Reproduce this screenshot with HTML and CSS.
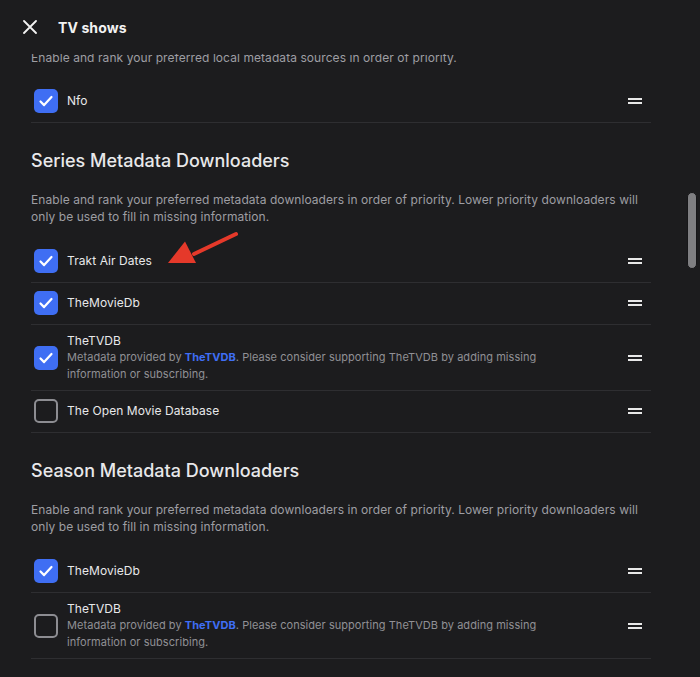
FILE: index.html
```html
<!DOCTYPE html>
<html lang="en">

<head>
  <meta charset="UTF-8">
  <title>TV shows</title>
  <link rel="stylesheet" href="styles.css">
</head>

<body>
  <header class="topbar">
    <button class="close-btn" aria-label="Close">
      <svg viewBox="0 0 14 14" width="14" height="14">
        <path d="M1 1L13 13M13 1L1 13" stroke="currentColor" stroke-width="1.8" stroke-linecap="round" />
      </svg>
    </button>
    <h1>TV shows</h1>
  </header>

  <main class="content">
    <p class="section-desc first">Enable and rank your preferred local metadata sources in order of priority.</p>
    <ul class="sources">
      <li class="source">
        <span class="check on"></span>
        <div class="source-text">Nfo</div>
        <span class="handle"></span>
      </li>
    </ul>

    <section class="group">
      <h2>Series Metadata Downloaders</h2>
      <p class="section-desc">Enable and rank your preferred metadata downloaders in order of priority. Lower priority downloaders will only be used to fill in missing information.</p>
      <ul class="sources">
        <li class="source">
          <span class="check on"></span>
          <div class="source-text">Trakt Air Dates</div>
          <span class="handle"></span>
        </li>
        <li class="source">
          <span class="check on"></span>
          <div class="source-text">TheMovieDb</div>
          <span class="handle"></span>
        </li>
        <li class="source tall">
          <span class="check on"></span>
          <div class="source-text">
            TheTVDB
            <small>Metadata provided by <a href="#">TheTVDB</a>. Please consider supporting TheTVDB by adding missing information or subscribing.</small>
          </div>
          <span class="handle"></span>
        </li>
        <li class="source">
          <span class="check"></span>
          <div class="source-text">The Open Movie Database</div>
          <span class="handle"></span>
        </li>
      </ul>
    </section>

    <section class="group">
      <h2>Season Metadata Downloaders</h2>
      <p class="section-desc">Enable and rank your preferred metadata downloaders in order of priority. Lower priority downloaders will only be used to fill in missing information.</p>
      <ul class="sources">
        <li class="source">
          <span class="check on"></span>
          <div class="source-text">TheMovieDb</div>
          <span class="handle"></span>
        </li>
        <li class="source tall">
          <span class="check"></span>
          <div class="source-text">
            TheTVDB
            <small>Metadata provided by <a href="#">TheTVDB</a>. Please consider supporting TheTVDB by adding missing information or subscribing.</small>
          </div>
          <span class="handle"></span>
        </li>
      </ul>
    </section>
  </main>

  <!-- pointer to the new downloader -->
  <svg class="pointer" width="80" height="45" viewBox="0 0 80 45">
    <path d="M72 4L30 24" stroke="#e5392a" stroke-width="4" stroke-linecap="round" />
    <path d="M4 33L21 11.5L32 33Z" fill="#e5392a" />
  </svg>

  <div class="scroll-thumb"></div>
</body>

</html>
```

FILE: styles.css
```css
* {
  box-sizing: border-box;
}

html,
body {
  margin: 0;
  height: 100%;
  overflow: hidden;
}

body {
  font-family: Inter, 'Noto Sans', Arial, sans-serif;
  background: #1c1c1e;
  color: #e6e6e8;
}

.topbar {
  display: flex;
  align-items: center;
  height: 54px;
  padding: 0 0 0 23px;
  position: relative;
  z-index: 1;
  background: #1c1c1e;
}

.close-btn {
  display: flex;
  background: none;
  border: none;
  padding: 0;
  color: #f2f2f2;
  width: 14px;
  height: 14px;
}

.topbar h1 {
  margin: 0 0 0 21px;
  font-size: 14px;
  letter-spacing: 0.1px;
  font-weight: 700;
  color: #f2f2f2;
}

.content {
  width: 651px;
  padding-left: 31px;
}

.section-desc {
  margin: 0;
  font-size: 12px;
  letter-spacing: 0.07px;
  line-height: 17px;
  color: #9e9ea3;
}

.section-desc.first {
  margin-top: -5px;
}

.sources {
  list-style: none;
  margin: 15px 0 0 0;
  padding: 0;
}

.group .sources {
  margin-top: 15px;
}

.source {
  display: flex;
  align-items: center;
  min-height: 42px;
  padding: 8px 5px 9px 3px;
  border-bottom: 1px solid #2e2e31;
}

.group .sources .source:first-child {
  padding-top: 9px;
}

.source.tall {
  padding: 8px 5px 7px 3px;
}

.check {
  flex: none;
  width: 24px;
  height: 24px;
  border-radius: 5px;
  border: 2px solid #8d8d92;
  background: #1c1c1e;
}

.check.on {
  border: none;
  background: #3f6ef3 url("data:image/svg+xml,%3Csvg xmlns='http://www.w3.org/2000/svg' viewBox='0 0 24 24'%3E%3Cpath d='M6.5 12.5l3.6 3.6L17.5 8' fill='none' stroke='white' stroke-width='2.2' stroke-linecap='round' stroke-linejoin='round'/%3E%3C/svg%3E") center / 24px 24px no-repeat;
}

.source-text {
  flex: 1;
  margin-left: 9px;
  font-size: 12px;
  letter-spacing: 0.07px;
  line-height: 16px;
  color: #e8e8ea;
}

.source-text small {
  display: block;
  font-size: 11px;
  letter-spacing: 0.05px;
  line-height: 17px;
  color: #909095;
  padding-right: 40px;
}

.source-text a {
  color: #3f6ef3;
  font-weight: 700;
  text-decoration: none;
}

.handle {
  flex: none;
  width: 14px;
  height: 6px;
  margin-right: 4px;
  border-top: 2px solid #e8e8e8;
  border-bottom: 2px solid #e8e8e8;
}

.group h2 {
  margin: 26px 0 18px 0;
  font-size: 18px;
  line-height: 24px;
  font-weight: 500;
  color: #e8e8ea;
}

.pointer {
  position: absolute;
  left: 164px;
  top: 230px;
}

.scroll-thumb {
  position: absolute;
  left: 687px;
  top: 192px;
  width: 10px;
  height: 77px;
  border-radius: 5px;
  background: #7f7f82;
  border: 1px solid #161618;
}
```
